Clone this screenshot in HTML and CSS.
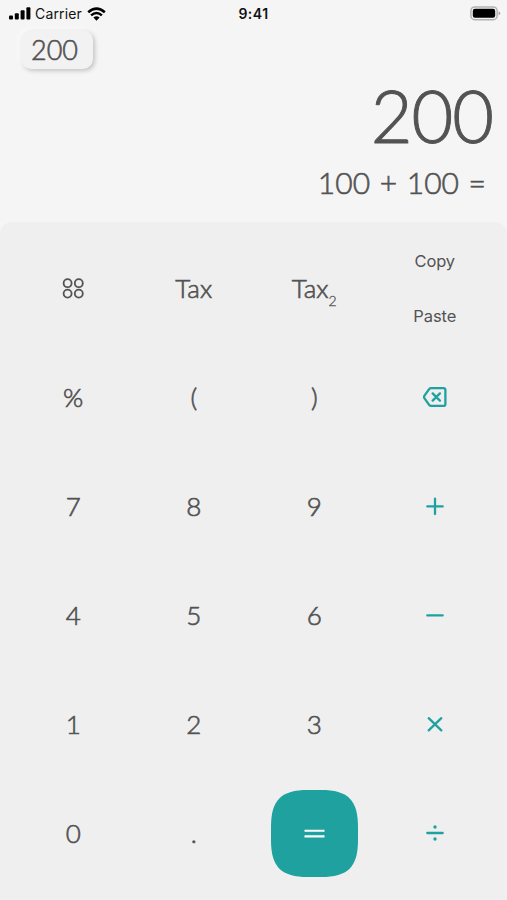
FILE: index.html
```html
<!DOCTYPE html>
<html lang="en">
<head>
<meta charset="utf-8">
<title>Calculator</title>
<link rel="stylesheet" href="styles.css">
</head>
<body>
<main class="app">
  <header class="status">
    <div class="network">
      <svg class="signal" width="22" height="13" viewBox="0 0 22 13"><rect x="0" y="8.5" width="4" height="4" rx="1"/><rect x="5.8" y="6.2" width="4" height="6.3" rx="1"/><rect x="11.6" y="3.3" width="4" height="9.2" rx="1"/><rect x="17.4" y="0.3" width="4" height="12.2" rx="1"/></svg>
      <span class="carrier">Carrier</span>
      <svg class="wifi" width="19" height="14" viewBox="0 0 19 14"><path d="M1.2 5.2Q9.5 -2 17.8 5.2" fill="none" stroke="#000" stroke-width="2.6"/><path d="M4.1 8.4Q9.5 3.6 14.9 8.4" fill="none" stroke="#000" stroke-width="2.5"/><path d="M6.4 10.5Q9.5 7.8 12.6 10.5L9.5 13.7Z"/></svg>
    </div>
    <time class="time">9:41</time>
    <svg class="battery" width="31" height="15" viewBox="0 0 31 15"><rect x="0.9" y="0.9" width="26.2" height="12.8" rx="3.8" fill="none" stroke="#b3b3b3" stroke-width="1.5"/><rect x="2.8" y="2.8" width="22.4" height="9" rx="2.2"/><path d="M28.6 5.2Q31.6 7.3 28.6 9.4Z" fill="#999"/></svg>
  </header>
  <section class="display">
    <div class="history">200</div>
    <output class="result">200</output>
    <div class="expression">100 + 100 =</div>
  </section>
  <section class="keypad">
    <button class="key"><svg width="24" height="24" viewBox="0 0 24 24" fill="none" stroke="#535353" stroke-width="1.8"><circle cx="6.6" cy="7.2" r="4"/><circle cx="17.8" cy="7.2" r="4"/><circle cx="6.6" cy="17.6" r="4"/><circle cx="17.8" cy="17.6" r="4"/></svg></button>
    <button class="key">Tax</button>
    <button class="key tax2">Tax<sub>2</sub></button>
    <div class="clipboard"><button class="small">Copy</button><button class="small">Paste</button></div>
    <button class="key">%</button>
    <button class="key">(</button>
    <button class="key">)</button>
    <button class="key op"><svg width="24" height="24" viewBox="0 0 24 24"><path d="M8 3.1H20.4Q22.4 3.1 22.4 5.1V18.9Q22.4 20.9 20.4 20.9H8Q7 20.9 6.3 20.1L1.5 13.4Q.7 12 1.5 10.6L6.3 3.9Q7 3.1 8 3.1ZM9.7 8.4L16.9 15.6M16.9 8.4L9.7 15.6"/></svg></button>
    <button class="key">7</button>
    <button class="key">8</button>
    <button class="key">9</button>
    <button class="key op"><svg width="24" height="24" viewBox="0 0 24 24"><path d="M4.3 12.4H19.7M12 4.7V20.1"/></svg></button>
    <button class="key">4</button>
    <button class="key">5</button>
    <button class="key">6</button>
    <button class="key op"><svg width="24" height="24" viewBox="0 0 24 24"><path d="M4.3 12.4H19.7"/></svg></button>
    <button class="key">1</button>
    <button class="key">2</button>
    <button class="key">3</button>
    <button class="key op"><svg width="24" height="24" viewBox="0 0 24 24"><path d="M5.7 6.2L18.3 18.4M18.3 6.2L5.7 18.4"/></svg></button>
    <button class="key">0</button>
    <button class="key">.</button>
    <button class="key equals"><svg width="87" height="87" viewBox="0 0 87 87"><path d="M0 37C0 10 10 0 37 0H50C77 0 87 10 87 37V50C87 77 77 87 50 87H37C10 87 0 77 0 50Z" fill="#1fa19f"/><path d="M33.5 40.7H53.5M33.5 46.4H53.5" stroke="#fff" stroke-width="2.1"/></svg></button>
    <button class="key op"><svg width="24" height="24" viewBox="0 0 24 24"><path d="M4.3 12H19.7"/><circle cx="12" cy="6" r="1.7"/><circle cx="12" cy="18" r="1.7"/></svg></button>
  </section>
</main>
</body>
</html>
```
FILE: styles.css
```css
* { box-sizing: border-box; }
body { margin: 0; background: #f5f5f5; }
.app {
  width: 507px;
  height: 900px;
  display: flex;
  flex-direction: column;
  overflow: hidden;
  background: #f5f5f5;
  color: #535353;
  font-family: Lato, sans-serif;
  font-weight: 300;
}
svg { display: block; }
.status {
  height: 29px;
  padding: 0 6px 2px 9px;
  display: grid;
  grid-template-columns: 1fr auto 1fr;
  align-items: center;
  color: #111;
  font-family: Inter, sans-serif;
  font-weight: 400;
}
.network { display: flex; align-items: center; }
.carrier { margin-left: 4px; font-size: 14px; line-height: 18px; letter-spacing: .15px; }
.wifi { margin-left: 5px; }
.time { margin-right: 3px; font-size: 14px; font-weight: 600; letter-spacing: .5px; }
.battery { justify-self: end; }
.display {
  height: 193px;
  display: flex;
  flex-direction: column;
  align-items: flex-end;
}
.history {
  align-self: flex-start;
  width: 72px;
  height: 39px;
  margin: 1px 0 0 21px;
  border-radius: 10px;
  background: #f2f2f2;
  box-shadow: 2px 2px 4px #c5c5c5, -2px -2px 4px #fafafa;
  font-size: 27px;
  line-height: 39px;
  padding-left: 10px;
  -webkit-text-stroke: .6px #535353;
}
.result {
  margin: 9px 14px 0 0;
  font-size: 72px;
  line-height: 74px;
  letter-spacing: -1px;
  -webkit-text-stroke: 1px #535353;
}
.expression {
  margin: 11px 21px 0 0;
  font-size: 30px;
  line-height: 38px;
  white-space: nowrap;
  word-spacing: 1.5px;
  -webkit-text-stroke: .6px #535353;
}
.keypad {
  flex: 1;
  padding: 12px 12px 12px 13px;
  display: grid;
  grid-template-columns: repeat(4, 1fr);
  grid-template-rows: repeat(6, 109px);
  background: #efefef;
  border-radius: 12px 12px 0 0;
}
button {
  border: 0;
  padding: 0;
  background: none;
  color: inherit;
  font: inherit;
}
.key {
  display: flex;
  align-items: center;
  justify-content: center;
  padding-bottom: 1px;
  font-size: 26px;
  line-height: 32px;
  -webkit-text-stroke: .65px #535353;
}
.equals { padding-bottom: 0; }
.tax2 sub {
  align-self: center;
  margin-top: 25px;
  font-size: 14px;
  line-height: 16px;
  -webkit-text-stroke-width: .3px;
}
.clipboard {
  display: grid;
  grid-template-rows: 1fr 1fr;
  font-family: Inter, sans-serif;
  font-weight: 400;
}
.small { font-size: 16.5px; letter-spacing: -.1px; }
.op svg { fill: none; stroke: #1fa19f; stroke-width: 2.3; stroke-linecap: round; stroke-linejoin: round; }
.op circle { fill: #1fa19f; stroke: none; }
```
